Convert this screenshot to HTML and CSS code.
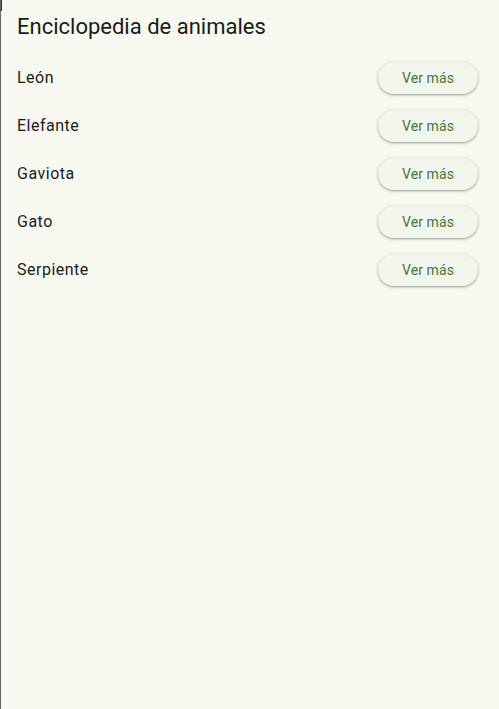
FILE: index.html
```html
<!DOCTYPE html>
<html lang="es">
<head>
<meta charset="utf-8">
<link rel="stylesheet" href="styles.css">
</head>
<body>
<div class="app">
  <header class="appbar"><h1 class="title">Enciclopedia de animales</h1></header>
  <ul class="list">
    <li class="row"><span class="name">León</span><button class="btn">Ver más</button></li>
    <li class="row"><span class="name">Elefante</span><button class="btn">Ver más</button></li>
    <li class="row"><span class="name">Gaviota</span><button class="btn">Ver más</button></li>
    <li class="row"><span class="name">Gato</span><button class="btn">Ver más</button></li>
    <li class="row"><span class="name">Serpiente</span><button class="btn">Ver más</button></li>
  </ul>
</div>
</body>
</html>
```
FILE: styles.css
```css
html, body {
  margin: 0;
  padding: 0;
  height: 100%;
}
body {
  background: #f7f9f1;
  font-family: Roboto, "Noto Sans", sans-serif;
  color: #1a1c18;
}
.app {
  height: 100%;
  box-sizing: border-box;
  border-left: 1px solid #62666a;
  background: linear-gradient(#2e3133, #2e3133) 0 0 / 1px 11px no-repeat;
}
.appbar {
  height: 54px;
  display: flex;
  align-items: center;
  padding: 0 16px;
}
.title {
  margin: 0;
  font-size: 22px;
  font-weight: 400;
  line-height: 28px;
}
.list {
  list-style: none;
  margin: 0;
  padding: 0;
}
.row {
  height: 48px;
  display: flex;
  align-items: center;
  justify-content: space-between;
  padding: 0 21px 0 16px;
}
.name {
  font-size: 16px;
  letter-spacing: 0.5px;
  line-height: 24px;
}
.btn {
  height: 32px;
  width: 100px;
  border: none;
  border-radius: 16px;
  background: #f2f5ec;
  color: #44733a;
  font-family: Roboto, sans-serif;
  font-size: 14px;
  font-weight: 400;
  letter-spacing: 0.1px;
  box-shadow: 0 1px 2px rgba(0,0,0,0.26), 0 1px 3px 1px rgba(0,0,0,0.09);
  padding: 0;
}
```
